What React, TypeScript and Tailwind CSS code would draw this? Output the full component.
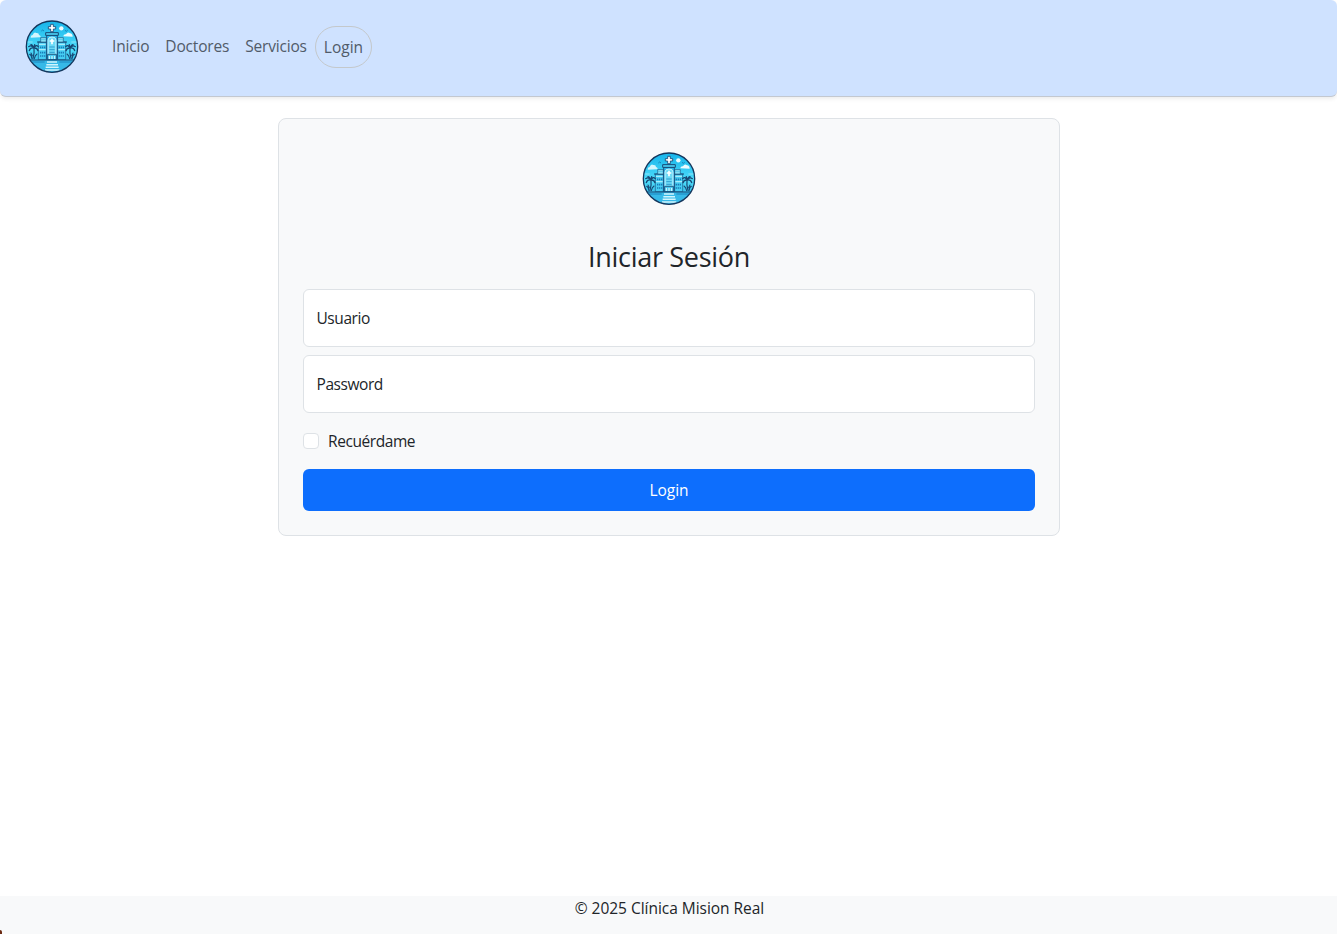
import { useState } from 'react';

function Palm({ flip = false }: { flip?: boolean }) {
  return (
    <g transform={flip ? 'translate(192 0) scale(-1 1)' : undefined} fill="none" stroke="#174874" strokeLinecap="round">
      <path d="M42 101 Q44 114 39 130" strokeWidth="3.6" />
      <path d="M41 98 Q34 89 26 95 M41 99 Q31 97 28 107 M41 98 Q36 87 33 89 M42 98 Q48 88 55 95 M42 99 Q51 98 54 107 M42 98 L44 89" strokeWidth="4" />
      <path d="M29 118 Q34 120 36 131 M51 117 Q45 121 43 131 M33 114 L37 122" strokeWidth="3.2" />
    </g>
  );
}

function Wing({ flip = false }: { flip?: boolean }) {
  return (
    <g transform={flip ? 'translate(192 0) scale(-1 1)' : undefined}>
      <path d="M55 81 H79 V134 H55 Z" fill="#45cdf3" stroke="#1a5484" strokeWidth="2" />
      <path d="M51 81 H80" stroke="#164775" strokeWidth="3" />
      <path d="M62 68 H79 V81 H62 Z" fill="#8be6fa" stroke="#1a5484" strokeWidth="2" />
      <path d="M62 74 H79" stroke="#39b7e2" strokeWidth="2" />
      <path d="M57 88 H77 M57 104 H77" stroke="#a9ecfb" strokeWidth="4" />
      <path d="M60 97 H76 M60 113 H76 M60 123 H76" stroke="#1b7db8" strokeWidth="5" strokeDasharray="4 2" />
    </g>
  );
}

function ClinicLogo() {
  return (
    <svg className="block size-16 shrink-0" viewBox="0 0 192 192" role="img" aria-label="Clínica Mision Real">
      <defs>
        <linearGradient id="sky" x1="0" y1="0" x2="0" y2="1">
          <stop offset="0" stopColor="#16b4ea" />
          <stop offset="0.55" stopColor="#4fdcfa" />
          <stop offset="1" stopColor="#21a9df" />
        </linearGradient>
        <clipPath id="disc">
          <circle cx="96" cy="95" r="77" />
        </clipPath>
      </defs>
      <circle cx="96" cy="95" r="77" fill="url(#sky)" />
      <g clipPath="url(#disc)">
        <path d="M32 68 Q31 61 38 60 Q42 49 49 54 Q57 53 57 60 Q64 62 61 67 Z" fill="#d2f6fd" />
        <path d="M130 64 Q131 57 138 58 Q143 49 150 55 Q158 56 158 65 Z" fill="#ebfbff" />
        <circle cx="124" cy="40" r="6.5" fill="#ebfbff" />
        <path d="M64 48 l4 -3 l4 3 M135 46 l4 3 l4 -3" fill="none" stroke="#127ab0" strokeWidth="2.5" />
        <path d="M23 81 H38 M154 81 H170" stroke="#8ce5f8" strokeWidth="3" />
        <Wing />
        <Wing flip />
        <path d="M80 61 H112 V134 H80 Z" fill="#2db8ea" stroke="#164775" strokeWidth="2.6" />
        <path d="M77 53 H115 V61 H77 Z" fill="#4bd0f3" stroke="#164775" strokeWidth="3" />
        <path d="M84 119 V75 Q84 66 96 66 Q108 66 108 75 V119 Z" fill="#6cdaf6" stroke="#d9f7fd" strokeWidth="2.5" />
        <path d="M96 71 V88 M89 78 H103" stroke="#ffffff" strokeWidth="5" />
        <path d="M88 96 H104 M88 104 H104 M88 112 H104" stroke="#2391c9" strokeWidth="2.5" />
        <path d="M83 118 H109 V134 H83 Z" fill="#4bcaf0" stroke="#164775" strokeWidth="2.5" />
        <path d="M88 123 V132 M96 123 V132 M104 123 V132" stroke="#d7f8ff" strokeWidth="3.5" />
        <Palm />
        <Palm flip />
        <path d="M20 135 H172 V180 H20 Z" fill="#36b9e8" />
        <path d="M26 135 H166" stroke="#174874" strokeWidth="3.5" />
        <path d="M36 141 H74 M118 141 H156" stroke="#1b86bf" strokeWidth="3" />
        <path d="M81 141 H111 M79 149 H114 M77 157 H116 M75 165 H118" stroke="#d2f5fd" strokeWidth="4.5" />
      </g>
      <path d="M92 28 H100 V35 H107 V42 H100 V50 H92 V42 H85 V35 H92 Z" fill="#ffffff" stroke="#164775" strokeWidth="2.5" />
      <circle cx="96" cy="95" r="77" fill="none" stroke="#14365c" strokeWidth="4" />
    </svg>
  );
}

function Field({ label, type }: { label: string; type: string }) {
  const [value, setValue] = useState('');
  return (
    <label className="grid h-[58px] items-center rounded-md border border-[#dee2e6] bg-white px-[12.5px] tracking-[-0.43px]">
      {value === '' && <span className="pointer-events-none col-start-1 row-start-1">{label}</span>}
      <input
        type={type}
        aria-label={label}
        value={value}
        onChange={(e) => setValue(e.target.value)}
        className="col-start-1 row-start-1 h-full w-full bg-transparent outline-none"
      />
    </label>
  );
}

export default function App() {
  return (
    <div className="relative flex h-screen flex-col overflow-hidden bg-white font-['Open_Sans','Noto_Sans',sans-serif] text-[15.5px] leading-6 text-[#212529]">
      <header className="flex h-[97px] shrink-0 items-start rounded-md border-b border-[#c3c8d0] bg-[#cfe2ff] pt-[15px] pl-5 shadow-[0_2px_4px_rgba(0,0,0,0.075)]">
        <ClinicLogo />
        <nav className="mt-[11px] ml-5 flex tracking-[-0.18px] text-[#515b69]">
          <a href="#" className="px-2 py-2">Inicio</a>
          <a href="#" className="px-2 py-2">Doctores</a>
          <a href="#" className="px-2 py-2">Servicios</a>
          <a href="#" className="h-[42px] rounded-[21px] border border-[#c4c8cb] px-2 py-2 tracking-normal">Login</a>
        </nav>
      </header>
      <main className="flex-1 pt-[21px] pl-[278px]">
        <form
          onSubmit={(e) => e.preventDefault()}
          className="flex h-[418px] w-[782px] flex-col rounded-lg border border-[#dee2e6] bg-[#f8f9fa] px-6 pt-7"
        >
          <div className="flex justify-center">
            <ClinicLogo />
          </div>
          <h1 className="mt-[29px] mb-[15px] text-center text-[27px] leading-[34px] tracking-[-0.3px]">Iniciar Sesión</h1>
          <div className="flex flex-col gap-2">
            <Field label="Usuario" type="text" />
            <Field label="Password" type="password" />
          </div>
          <label className="mt-4 flex items-center gap-[9px] tracking-[-0.43px]">
            <input type="checkbox" className="size-4 appearance-none rounded border border-[#dee2e6] bg-white checked:bg-[#0d6efd]" />
            Recuérdame
          </label>
          <button type="submit" className="mt-4 h-[42px] rounded-md bg-[#0d6efd] text-white">
            Login
          </button>
        </form>
      </main>
      <footer className="h-[38px] shrink-0 bg-[#f8f9fa] pl-0.5 text-center tracking-[-0.03px]">© 2025 Clínica Mision Real</footer>
      <div className="absolute bottom-0 left-0 h-1 w-[2px] rounded-tr-full bg-[#6b2a12]" />
    </div>
  );
}
